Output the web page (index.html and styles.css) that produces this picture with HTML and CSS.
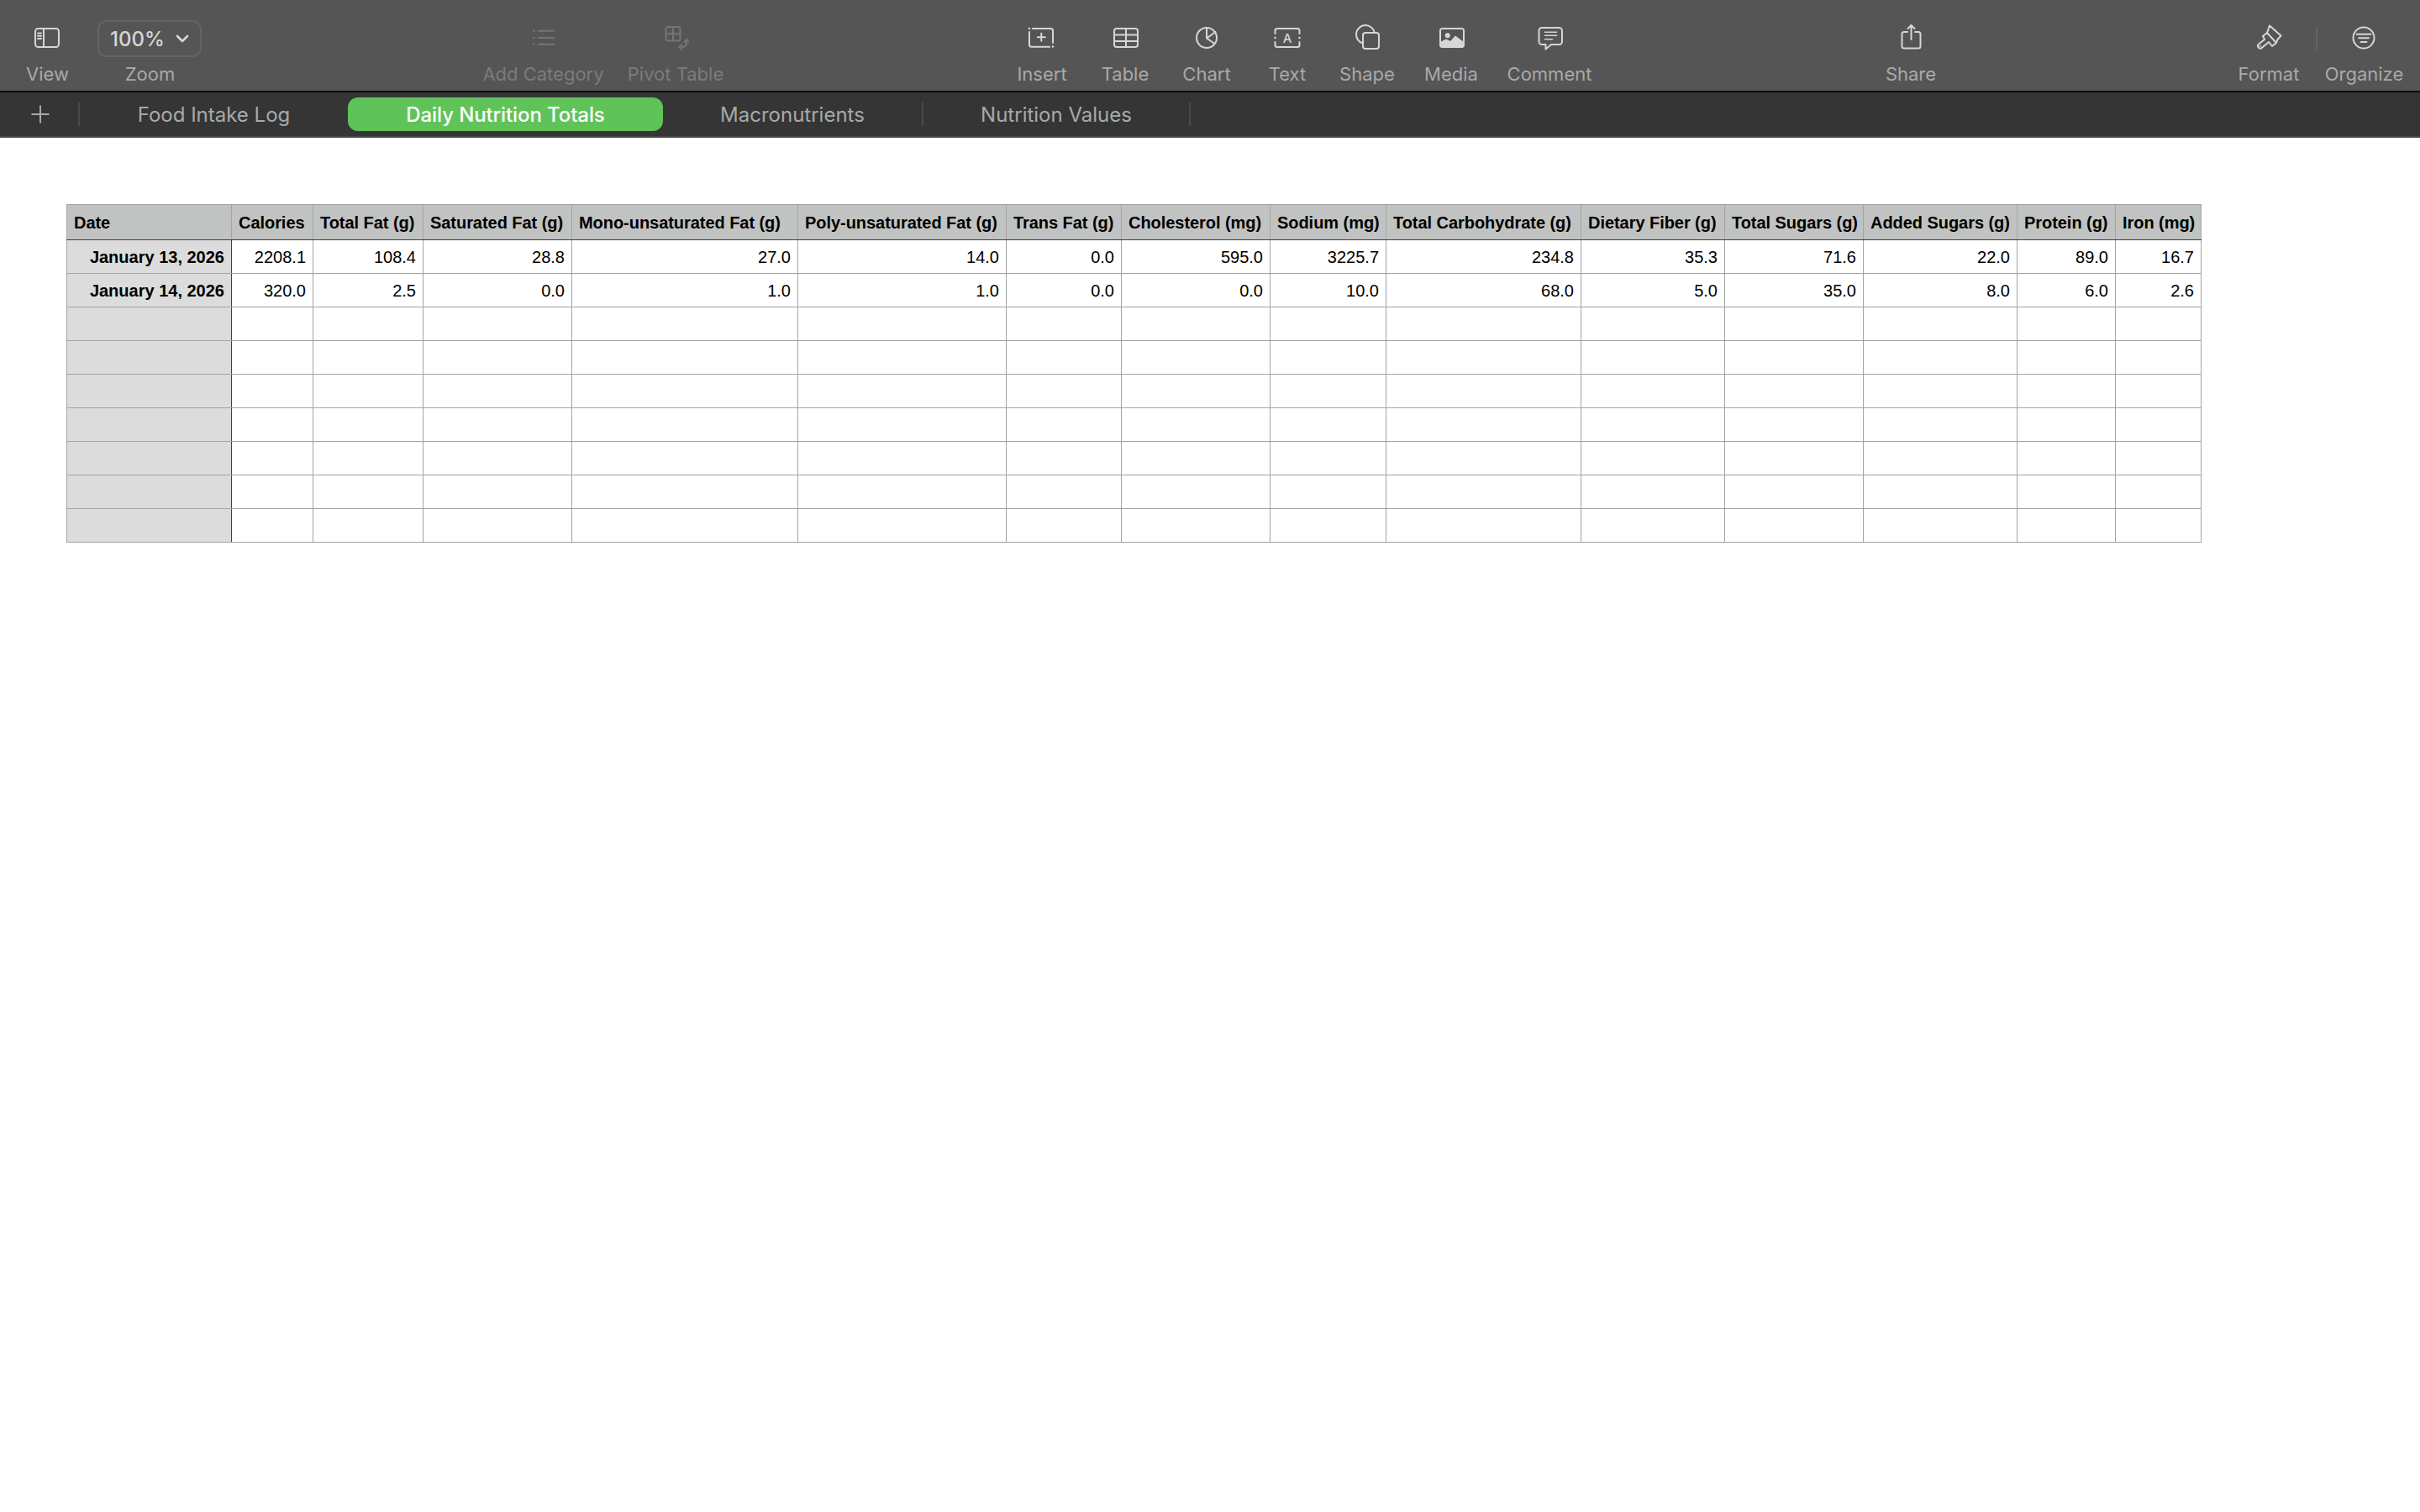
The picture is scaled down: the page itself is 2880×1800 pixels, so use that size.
FILE: index.html
```html
<!DOCTYPE html>
<html lang="en">
<head>
<meta charset="utf-8">
<title>Numbers</title>
<link rel="stylesheet" href="styles.css">
</head>
<body>
<header class="toolbar">
  <div class="tool nudge"><svg class="icon" viewBox="0 0 48 36"><rect x="11" y="7" width="28" height="22" rx="3.5"/><path d="M21 7V29M14 12.5H18M14 15.8H18M14 19H18"/></svg><span class="label">View</span></div>
  <div class="tool nudge"><div class="zoom-box"><span>100%</span><svg class="chev" viewBox="0 0 16 10"><path d="M2 2L8 8L14 2"/></svg></div><span class="label">Zoom</span></div>
  <div class="gap"></div>
  <div class="tool off nudge"><svg class="icon" viewBox="0 0 48 36"><path d="M20 9.700H38.500M20 18H38.500M20 25.700H38.500"/><path class="dot" d="M13 8L16.500 9.700L13 11.400ZM13 16.300L16.500 18L13 19.700ZM13 24L16.500 25.700L13 27.400Z"/></svg><span class="label">Add Category</span></div>
  <div class="tool off"><svg class="icon" viewBox="0 0 48 36"><rect x="12.500" y="5" width="17" height="16.500" rx="2.500"/><path d="M21 5V21.500M12.500 13.300H29.500M37 22V24Q37 29 31 29M34.500 23L37 19.500L39.500 23M31.500 26L28 29L31.500 32"/></svg><span class="label">Pivot Table</span></div>
  <div class="gap"></div>
  <div class="tool"><svg class="icon" viewBox="0 0 48 36"><path d="M13 7H34.500A2.500 2.500 0 0 1 37 9.500V24M9 11V26.200A2.500 2.500 0 0 0 11.500 28.700H33M18.800 17.300H27.800M23.300 12.800V21.800"/><circle class="dot" cx="9" cy="7" r="1.300"/><circle class="dot" cx="37" cy="28.500" r="1.300"/></svg><span class="label">Insert</span></div>
  <div class="tool"><svg class="icon" viewBox="0 0 48 36"><rect x="11" y="7" width="28" height="22" rx="3"/><path d="M11 14.500H39M11 22H39M25 7V29"/></svg><span class="label">Table</span></div>
  <div class="tool"><svg class="icon" viewBox="0 0 48 36"><circle cx="24" cy="18" r="12"/><path d="M24 6V18.500L34.500 11M24 18.500L33.500 25"/></svg><span class="label">Chart</span></div>
  <div class="tool"><svg class="icon" viewBox="0 0 48 36"><path d="M9.500 13V9.500A2.500 2.500 0 0 1 12 7H36A2.500 2.500 0 0 1 38.500 9.500V13M38.500 23V26.500A2.500 2.500 0 0 1 36 29H12A2.500 2.500 0 0 1 9.500 26.500V23"/><circle class="dot" cx="9.500" cy="18" r="1.300"/><circle class="dot" cx="38.500" cy="18" r="1.300"/><text class="icon-text" x="24" y="23.500">A</text></svg><span class="label">Text</span></div>
  <div class="tool"><svg class="icon" viewBox="0 0 48 36"><rect x="19" y="12" width="19" height="19" rx="3"/><path d="M19 24.600A11 11 0 1 1 32.800 12"/></svg><span class="label">Shape</span></div>
  <div class="tool"><svg class="icon" viewBox="0 0 48 36"><rect x="11" y="7" width="28" height="22" rx="2.500"/><circle class="dot" cx="19.700" cy="15.300" r="3"/><path class="dot" d="M11 23L18 19.500L23 22L29 15.500L39 23V27A2 2 0 0 1 37 29H13A2 2 0 0 1 11 27Z"/></svg><span class="label">Media</span></div>
  <div class="tool"><svg class="icon" viewBox="0 0 48 36"><path d="M15 6H35.500A3.500 3.500 0 0 1 39 9.500V22.500A3.500 3.500 0 0 1 35.500 26H26L19.500 31.500V26H15A3.500 3.500 0 0 1 11.500 22.500V9.500A3.500 3.500 0 0 1 15 6Z"/><path class="thin" d="M18.500 11.300H32.500M18.500 15.300H32.500M18.500 19.700H27.500"/></svg><span class="label">Comment</span></div>
  <div class="gap"></div>
  <div class="tool"><svg class="icon" viewBox="0 0 48 36"><path d="M20 11H16A2.500 2.500 0 0 0 13.500 13.500V28A2.500 2.500 0 0 0 16 30.500H33A2.500 2.500 0 0 0 35.500 28V13.500A2.500 2.500 0 0 0 33 11H29M24.500 20V3M20.500 7L24.500 3L28.500 7"/></svg><span class="label">Share</span></div>
  <div class="gap"></div>
  <div class="tool format"><svg class="icon" viewBox="0 0 48 36"><path d="M25 3.500L22 12L17 16L19 20L12 25.500A2.800 2.800 0 0 0 16 29.800L24 23L28 28L33 24L34.500 20L38.500 15.500ZM22 12L33 24"/><circle class="dot" cx="14" cy="27.700" r="1"/></svg><span class="label">Format</span></div>
  <div class="divider"></div>
  <div class="tool nudge"><svg class="icon" viewBox="0 0 48 36"><circle cx="25" cy="18" r="12.500"/><path d="M16.500 13.700H33.500M19 18.300H31M21.500 23H28.500"/></svg><span class="label">Organize</span></div>
</header>

<nav class="tabs">
  <button class="add" aria-label="Add sheet"><svg viewBox="0 0 24 24"><path d="M12 1.500V22.500M1.500 12H22.500"/></svg></button>
  <a class="tab">Food Intake Log</a>
  <a class="tab active">Daily Nutrition Totals</a>
  <a class="tab">Macronutrients</a>
  <a class="tab">Nutrition Values</a>
</nav>

<main class="sheet">
  <table class="grid">
    <colgroup>
      <col class="c1"><col class="c2"><col class="c3"><col class="c4"><col class="c5"><col class="c6"><col class="c7"><col class="c8"><col class="c9"><col class="c10"><col class="c11"><col class="c12"><col class="c13"><col class="c14"><col class="c15">
    </colgroup>
    <thead>
      <tr><th>Date</th><th>Calories</th><th>Total Fat (g)</th><th>Saturated Fat (g)</th><th>Mono-unsaturated Fat (g)</th><th>Poly-unsaturated Fat (g)</th><th>Trans Fat (g)</th><th>Cholesterol (mg)</th><th>Sodium (mg)</th><th>Total Carbohydrate (g)</th><th>Dietary Fiber (g)</th><th>Total Sugars (g)</th><th>Added Sugars (g)</th><th>Protein (g)</th><th>Iron (mg)</th></tr>
    </thead>
    <tbody>
      <tr><th>January 13, 2026</th><td>2208.1</td><td>108.4</td><td>28.8</td><td>27.0</td><td>14.0</td><td>0.0</td><td>595.0</td><td>3225.7</td><td>234.8</td><td>35.3</td><td>71.6</td><td>22.0</td><td>89.0</td><td>16.7</td></tr>
      <tr><th>January 14, 2026</th><td>320.0</td><td>2.5</td><td>0.0</td><td>1.0</td><td>1.0</td><td>0.0</td><td>0.0</td><td>10.0</td><td>68.0</td><td>5.0</td><td>35.0</td><td>8.0</td><td>6.0</td><td>2.6</td></tr>
      <tr><th></th><td></td><td></td><td></td><td></td><td></td><td></td><td></td><td></td><td></td><td></td><td></td><td></td><td></td><td></td></tr>
      <tr><th></th><td></td><td></td><td></td><td></td><td></td><td></td><td></td><td></td><td></td><td></td><td></td><td></td><td></td><td></td></tr>
      <tr><th></th><td></td><td></td><td></td><td></td><td></td><td></td><td></td><td></td><td></td><td></td><td></td><td></td><td></td><td></td></tr>
      <tr><th></th><td></td><td></td><td></td><td></td><td></td><td></td><td></td><td></td><td></td><td></td><td></td><td></td><td></td><td></td></tr>
      <tr><th></th><td></td><td></td><td></td><td></td><td></td><td></td><td></td><td></td><td></td><td></td><td></td><td></td><td></td><td></td></tr>
      <tr><th></th><td></td><td></td><td></td><td></td><td></td><td></td><td></td><td></td><td></td><td></td><td></td><td></td><td></td><td></td></tr>
      <tr><th></th><td></td><td></td><td></td><td></td><td></td><td></td><td></td><td></td><td></td><td></td><td></td><td></td><td></td><td></td></tr>
    </tbody>
  </table>
</main>
</body>
</html>
```
FILE: styles.css
```css
* { box-sizing: border-box; }
html, body { margin: 0; padding: 0; background: #fff; }
body { width: 2880px; height: 1800px; overflow: hidden; font-family: "Inter", "Liberation Sans", sans-serif; }

.toolbar {
  display: grid;
  grid-template-columns: 70px 174px 306px 150px 168px 302px 100px 98px 96px 96px 94px 106px 128px 306px 120px 306px 116px 2px 108px;
  height: 110px;
  padding-left: 20px;
  background: #555;
  border-bottom: 2px solid #0c0c0c;
}
.tool { display: flex; flex-direction: column; align-items: center; padding-top: 27px; height: 108px; }
.format { padding-left: 4px; }
.divider { width: 2px; height: 28px; margin-top: 32px; background: #646464; }
.icon { width: 48px; height: 36px; flex: none; fill: none; stroke: #d6d6d6; stroke-width: 2; stroke-linecap: round; stroke-linejoin: round; }
.icon .dot { fill: #d6d6d6; stroke: none; }
.icon .thin { stroke-width: 1.6; }
.icon-text { font: 500 15px "Inter", sans-serif; fill: #d6d6d6; stroke: none; text-anchor: middle; }
.label { margin-top: 12px; font-size: 22px; line-height: 26px; color: #a9a9a9; white-space: nowrap; }
.nudge .label { margin-left: 3px; }
.off .icon { stroke: #747474; }
.off .icon .dot { fill: #747474; }
.off .label { color: #7b7b7b; }

.zoom-box {
  display: flex; align-items: center; justify-content: center; gap: 13px;
  width: 124px; height: 44px; margin: -3px 0 -5px 2px;
  border: 2px solid #646464; border-radius: 11px;
  color: #d6d6d6; font-size: 24px; font-weight: 500;
}
.chev { width: 16px; height: 10px; fill: none; stroke: #d6d6d6; stroke-width: 2.6; stroke-linecap: round; stroke-linejoin: round; }

.tabs {
  display: grid;
  grid-template-columns: 95px 319px 375px 310px 318px;
  align-items: center;
  height: 54px;
  background: #353535;
  border-bottom: 2px solid #4b4b4b;
}
.add { display: flex; align-items: center; padding: 0 0 0 36px; height: 28px; background: none; border: 0; border-right: 2px solid #4a4a4a; }
.add svg { width: 24px; height: 24px; fill: none; stroke: #a9a9a9; stroke-width: 2; }
.tab { display: flex; align-items: center; justify-content: center; height: 28px; font-size: 24px; color: #a9a9a9; white-space: nowrap; border-right: 2px solid #4a4a4a; }
.tab:first-of-type, .tab.active { border-right: 0; }
.tab.active { height: 40px; background: #60c35a; color: #fff; font-weight: 500; letter-spacing: -.1px; border-radius: 12px; }

.sheet { padding: 79px 0 0 79px; }
.grid { table-layout: fixed; width: 2540px; border-collapse: collapse; font-family: "Liberation Sans", Arial, sans-serif; font-size: 20px; color: #000; }
.grid tr { height: 40px; }
.grid thead tr { height: 42px; }
.grid th, .grid td { padding: 2px 8px 0; border: 1px solid #a3a3a3; white-space: nowrap; overflow: hidden; }
.grid td { text-align: right; }
.grid tbody th { text-align: right; background: #dcdcdc; border-right-color: #3f3f3f; }
.grid thead th { text-align: left; background: #c1c3c2; border-bottom-color: #3f3f3f; letter-spacing: -.05px; }
.c1 { width: 196px; } .c2 { width: 97px; } .c3 { width: 131px; } .c4 { width: 177px; } .c5 { width: 269px; }
.c6 { width: 248px; } .c7 { width: 137px; } .c8 { width: 177px; } .c9 { width: 138px; } .c10 { width: 232px; }
.c11 { width: 171px; } .c12 { width: 165px; } .c13 { width: 183px; } .c14 { width: 117px; } .c15 { width: 102px; }
```
